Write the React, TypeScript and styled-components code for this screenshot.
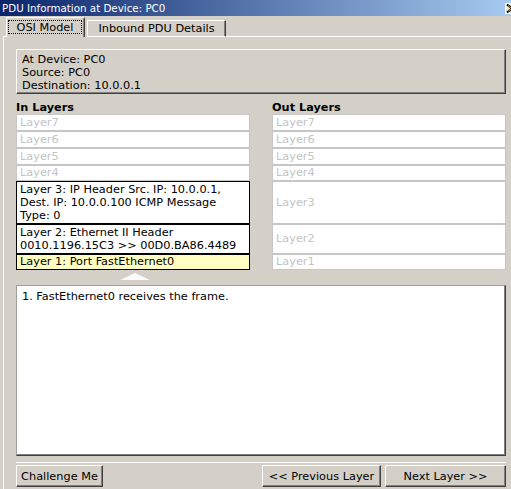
import React from "react";
import styled, { createGlobalStyle } from "styled-components";

const GlobalStyle = createGlobalStyle`
  html, body {
    margin: 0;
    padding: 0;
    background: #d4d0c8;
  }
  body {
    font-family: "DejaVu Sans", Verdana, sans-serif;
    font-size: 11.3px;
    color: #000;
  }
`;

const Window = styled.div`
  width: 511px;
  height: 489px;
  overflow: hidden;
  background: #d4d0c8;
  display: flex;
  flex-direction: column;
`;

const TitleBar = styled.div`
  flex: none;
  height: 16px;
  padding-left: 2px;
  display: flex;
  align-items: center;
  justify-content: space-between;
  overflow: hidden;
  background: linear-gradient(to right, #0a246a, #a6caf0);
  color: #fff;
  font-size: 10.3px;
  white-space: nowrap;
`;

const CloseIcon = styled.svg`
  flex: none;
  width: 14px;
  height: 11px;
  margin-right: -8px;
`;

const Body = styled.div`
  flex: 1;
  display: flex;
  flex-direction: column;
  padding-left: 3px;
  min-height: 0;
`;

const TabRow = styled.div`
  flex: none;
  height: 21px;
  display: flex;
  align-items: flex-end;
`;

const TabEdge = styled.div<{ $width?: number }>`
  flex: ${({ $width }) => ($width ? "none" : "1")};
  width: ${({ $width }) => ($width ? `${$width}px` : "auto")};
  height: 0;
  border-bottom: 1px solid #fff;
`;

const Tab = styled.div<{ $active?: boolean }>`
  box-sizing: border-box;
  height: ${({ $active }) => ($active ? "20px" : "17px")};
  width: ${({ $active }) => ($active ? "79px" : "139px")};
  margin-left: ${({ $active }) => ($active ? "0" : "2px")};
  padding: ${({ $active }) => ($active ? "2px 2px 0 1px" : "0")};
  display: flex;
  align-items: ${({ $active }) => ($active ? "flex-start" : "center")};
  justify-content: center;
  border-top: 1px solid #fff;
  border-left: 1px solid #fff;
  border-right: 1px solid #404040;
  border-bottom: ${({ $active }) => ($active ? "none" : "1px solid #fff")};
  box-shadow: inset -1px 0 0 #808080;
  white-space: nowrap;
`;

const FocusLabel = styled.span`
  box-sizing: border-box;
  width: 75px;
  height: 14px;
  display: flex;
  align-items: center;
  justify-content: center;
  border: 1px dotted #000;
`;

const Panel = styled.div`
  flex: 1;
  display: flex;
  flex-direction: column;
  border-left: 1px solid #fff;
  padding: 12px 5px 0 12px;
  min-height: 0;
`;

const InfoBox = styled.div`
  box-sizing: border-box;
  height: 45px;
  padding: 3px 5px 0;
  border-top: 1px solid #fff;
  border-left: 1px solid #fff;
  border-right: 1px solid #404040;
  border-bottom: 1px solid #404040;
  box-shadow: inset -1px -1px 0 #808080;
  line-height: 13px;
`;

const Columns = styled.div`
  margin-top: 7px;
  display: grid;
  grid-template-columns: 234px 234px;
  column-gap: 22px;
`;

const Column = styled.div`
  display: flex;
  flex-direction: column;
`;

const ColumnTitle = styled.div`
  height: 13px;
  line-height: 13px;
  font-weight: bold;
`;

const Stack = styled.div`
  display: flex;
  flex-direction: column;
`;

const LayerBox = styled.div<{ $h: number; $active?: boolean; $current?: boolean }>`
  box-sizing: border-box;
  height: ${({ $h }) => `${$h}px`};
  padding: ${({ $active }) => ($active ? "0 3px" : "0 3px")};
  display: flex;
  align-items: center;
  border: 1px solid ${({ $active }) => ($active ? "#000" : "#c6c6c6")};
  background: ${({ $current }) => ($current ? "#ffffc4" : "#fff")};
  color: ${({ $active }) => ($active ? "#000" : "#c4c4c4")};
  line-height: 13.3px;
`;

const Pointer = styled.div`
  height: 15px;
  display: flex;
  justify-content: center;
  padding-left: 4px;

  &::before {
    content: "";
    margin-top: 3px;
    width: 0;
    height: 0;
    border-left: 15px solid transparent;
    border-right: 15px solid transparent;
    border-bottom: 7px solid #fafafa;
  }
`;

const MessageBox = styled.div`
  box-sizing: border-box;
  height: 171px;
  padding: 4px 5px;
  background: #fff;
  border-top: 1px solid #a09e98;
  border-left: 1px solid #a09e98;
  border-right: 1px solid #404040;
  border-bottom: 1px solid #404040;
  box-shadow: inset -1px -1px 0 #808080;
  line-height: 13px;
`;

const ButtonBar = styled.div`
  margin-top: 6px;
  padding-top: 2px;
  border-top: 1px solid #fff;
  display: flex;
  justify-content: space-between;
`;

const ButtonGroup = styled.div`
  display: flex;
  gap: 4px;
`;

const Button = styled.button<{ $w: number }>`
  box-sizing: border-box;
  width: ${({ $w }) => `${$w}px`};
  height: 22px;
  padding: 0;
  margin: 0;
  font: inherit;
  color: #000;
  background: #d4d0c8;
  border-top: 1px solid #fff;
  border-left: 1px solid #fff;
  border-right: 1px solid #404040;
  border-bottom: 1px solid #404040;
  border-radius: 0;
  box-shadow: inset -1px -1px 0 #808080;
  white-space: nowrap;
`;

type Layer = {
  label: string;
  h: number;
  text?: string[];
  current?: boolean;
};

const heights = [17, 17, 17, 16, 43, 30, 16];

const inLayers: Layer[] = [
  { label: "Layer7", h: heights[0] },
  { label: "Layer6", h: heights[1] },
  { label: "Layer5", h: heights[2] },
  { label: "Layer4", h: heights[3] },
  {
    label: "Layer3",
    h: heights[4],
    text: ["Layer 3: IP Header Src. IP: 10.0.0.1,", "Dest. IP: 10.0.0.100 ICMP Message", "Type: 0"],
  },
  { label: "Layer2", h: heights[5], text: ["Layer 2: Ethernet II Header", "0010.1196.15C3 >> 00D0.BA86.4489"] },
  { label: "Layer1", h: heights[6], text: ["Layer 1: Port FastEthernet0"], current: true },
];

const outLayers: Layer[] = ["Layer7", "Layer6", "Layer5", "Layer4", "Layer3", "Layer2", "Layer1"].map((label, i) => ({
  label,
  h: heights[i],
}));

const LayerStack: React.FC<{ layers: Layer[] }> = ({ layers }) => (
  <Stack>
    {layers.map((l) => (
      <LayerBox key={l.label} $h={l.h} $active={!!l.text} $current={l.current}>
        {l.text ? (
          <div>
            {l.text.map((line) => (
              <div key={line}>{line}</div>
            ))}
          </div>
        ) : (
          l.label
        )}
      </LayerBox>
    ))}
  </Stack>
);

export default function App() {
  return (
    <>
      <GlobalStyle />
      <Window>
        <TitleBar>
          <span>PDU Information at Device: PC0</span>
          <CloseIcon viewBox="0 0 14 11">
            <rect x="0.5" y="0.5" width="13" height="10" fill="#ece9d8" stroke="#fff" />
            <path d="M2 1.5 L7 5.5 L2 9.5" fill="none" stroke="#000" strokeWidth="2" />
            <path d="M3 2.5 L6.5 5.5 L3 8.5" fill="none" stroke="#d07820" strokeWidth="1" />
          </CloseIcon>
        </TitleBar>
        <Body>
          <TabRow>
            <TabEdge $width={3} />
            <Tab $active>
              <FocusLabel>OSI Model</FocusLabel>
            </Tab>
            <Tab>Inbound PDU Details</Tab>
            <TabEdge />
          </TabRow>
          <Panel>
            <InfoBox>
              <div>At Device: PC0</div>
              <div>Source: PC0</div>
              <div>Destination: 10.0.0.1</div>
            </InfoBox>
            <Columns>
              <Column>
                <ColumnTitle>In Layers</ColumnTitle>
                <LayerStack layers={inLayers} />
                <Pointer />
              </Column>
              <Column>
                <ColumnTitle>Out Layers</ColumnTitle>
                <LayerStack layers={outLayers} />
              </Column>
            </Columns>
            <MessageBox>1. FastEthernet0 receives the frame.</MessageBox>
            <ButtonBar>
              <Button $w={87}>Challenge Me</Button>
              <ButtonGroup>
                <Button $w={119}>&lt;&lt; Previous Layer</Button>
                <Button $w={121}>Next Layer &gt;&gt;</Button>
              </ButtonGroup>
            </ButtonBar>
          </Panel>
        </Body>
      </Window>
    </>
  );
}
